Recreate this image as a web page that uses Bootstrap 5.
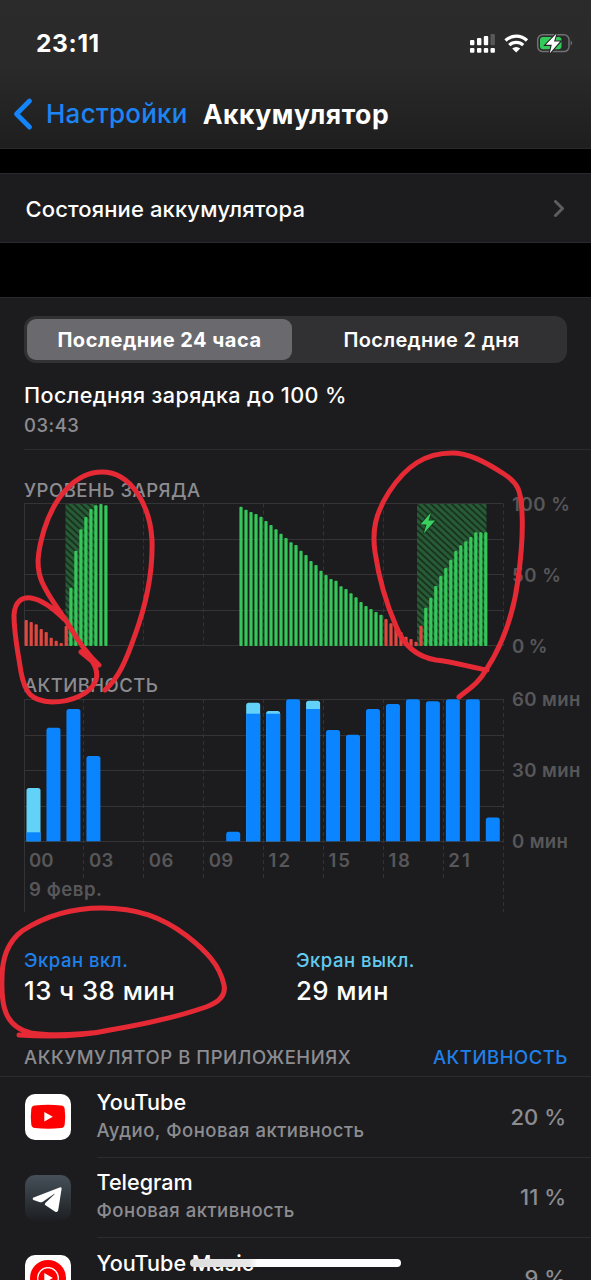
<!DOCTYPE html>
<html lang="ru" data-bs-theme="dark">
<head>
<meta charset="utf-8">
<meta name="viewport" content="width=device-width, initial-scale=1">
<title>Аккумулятор</title>
<link rel="stylesheet" href="https://cdn.jsdelivr.net/npm/bootstrap@5.3.0/dist/css/bootstrap.min.css">
<style>
body{background:#000;color:#fff;font-family:Inter,"Liberation Sans",sans-serif;width:591px;height:1280px;overflow:hidden;position:relative;line-height:1}
.top-area{height:149px;background:linear-gradient(#2b2b2b 0,#2a2a2a 45%,#1e1e1e 100%);border-bottom:1px solid #292929}
.status{height:86px;padding:0 18px 0 36px}
.clock{font-size:24.6px;font-weight:700;letter-spacing:.6px;padding-top:1px}
.titlebar{height:56px;padding-left:12px}
.back{color:#1c84f3;font-size:26px;font-weight:500;letter-spacing:.25px}
.page-title{font-size:26.6px;font-weight:700;margin-left:15px;letter-spacing:.5px}
.panel{background:#1c1c1e}
.health{margin-top:24px;height:70px;padding:2px 26px 0 25.500px;border-top:1px solid #29292b;border-bottom:1px solid #29292b;font-size:22px;font-weight:500;letter-spacing:.13px}
.usage{margin-top:54px;height:983px;border-top:1px solid #29292b}
.seg{margin:18px 24px 0;height:47px;border-radius:12px;background:#313134;padding:3px;font-size:20px;font-weight:600}
.seg div{border-radius:9px;padding-top:1px}
.seg .on{background:#69696e;flex:0 0 265px;font-weight:700;letter-spacing:.5px}
.seg .off{letter-spacing:.32px;padding-left:7px}
.last{height:87px;margin-left:24px;padding-top:20px;border-bottom:1px solid #2c2c2e}
.last-title{font-size:21.6px;line-height:24px;font-weight:500;letter-spacing:.38px;margin-bottom:7px}
.gray{color:#8c8c91}
.sub{font-size:18.5px;line-height:22px;font-weight:500;letter-spacing:.5px}
.cap{font-size:18.5px;line-height:24px;font-weight:500;padding-left:24px;letter-spacing:.53px}
.cap-level{padding-top:28px;margin-bottom:1px}
.cap-act{letter-spacing:.45px;margin-bottom:1px}
.chart{display:block;overflow:visible}
.chart text{fill:#57575a;font-size:18.6px;font-weight:600}
.stats{height:97px;padding:30px 0 0 24px}
.stats>div{width:272px}
.screen-on,.cap-link{color:#1f80ea}
.screen-off{color:#62cbef}
.stat-value{font-size:25.8px;line-height:30px;font-weight:500;margin-top:5px;letter-spacing:.45px}
.apps-head{height:61px;padding:29px 23px 0 0;border-bottom:1px solid #2c2c2e}
.app-row{height:80.5px;padding-left:25px}
.app-body{margin-left:25.500px;padding-right:25px;height:100%;border-bottom:1px solid #2c2c2e}
.app-text{padding-bottom:4px}
.app-name{font-size:21.6px;line-height:26px;font-weight:500;margin-bottom:4px}
.pct{font-size:22px;font-weight:500}
.marker{position:absolute;left:0;top:0;pointer-events:none}
.home-bar{position:absolute;left:190px;top:1259px;width:211px;height:8px;border-radius:4px;background:linear-gradient(90deg,#ddd,#e8e8e8 28%,#fff 32%)}
</style>
</head>
<body>
<header class="top-area">
  <div class="status d-flex align-items-center justify-content-between">
    <span class="clock">23:11</span>
    <svg width="104" height="24" viewBox="469 31 104 24">
      <g fill="#fff"><rect x="470" y="40" width="4.400" height="5.300" rx="1"/><rect x="477" y="38" width="4.400" height="7.300" rx="1"/><rect x="483.800" y="36" width="4.400" height="9.300" rx="1"/><rect x="490.500" y="34" width="4.400" height="11.300" rx="1" opacity=".22"/>
      <rect x="470" y="48" width="4.400" height="4.700" rx="1"/><rect x="477" y="48" width="4.400" height="4.700" rx="1"/><rect x="483.800" y="48" width="4.400" height="4.700" rx="1"/><rect x="490.500" y="48" width="4.400" height="4.700" rx="1"/></g>
      <g fill="none" stroke="#fff" stroke-width="3.200"><path d="M505.500 40.500a15.500 15.500 0 0 1 21.500 0"/><path d="M509.300 45.200a10 10 0 0 1 13.900 0"/></g>
      <path d="M512.200 48.500a6 6 0 0 1 8 0l-4 4z" fill="#fff"/>
      <rect x="537.700" y="34.700" width="31.300" height="16.900" rx="5" fill="none" stroke="#717174" stroke-width="1.500"/>
      <path d="M570.700 40.500q3 2.600 0 5.200z" fill="#717174"/>
      <rect x="540" y="37" width="21.500" height="12.300" rx="3" fill="#33cc5a"/>
      <path d="M556.500 33.500l-10.700 11.300h6l-2 8.500 10.200-11.800h-6z" fill="#fff" stroke="#242424" stroke-width="2.200" paint-order="stroke"/>
    </svg>
  </div>
  <nav class="titlebar d-flex align-items-center">
    <svg width="22" height="34" viewBox="0 0 22 34"><path d="M17.500 4L4.500 17l13 13" fill="none" stroke="#1484fa" stroke-width="4.800" stroke-linecap="round" stroke-linejoin="round"/></svg>
    <span class="back ms-2 ps-1">Настройки</span>
    <span class="page-title">Аккумулятор</span>
  </nav>
</header>

<section class="panel health d-flex align-items-center justify-content-between">
  <span>Состояние аккумулятора</span>
  <svg width="12" height="18" viewBox="0 0 12 18"><path d="M2.500 1.500l7 7-7 7" fill="none" stroke="#5d5d61" stroke-width="3" stroke-linecap="round" stroke-linejoin="round"/></svg>
</section>

<main class="panel usage">
  <div class="seg d-flex text-center">
    <div class="on d-flex align-items-center justify-content-center">Последние 24 часа</div>
    <div class="flex-fill d-flex align-items-center justify-content-center off">Последние 2 дня</div>
  </div>
  <div class="last">
    <div class="last-title">Последняя зарядка до 100 %</div>
    <div class="sub gray">03:43</div>
  </div>
  <h2 class="cap gray cap-level">УРОВЕНЬ ЗАРЯДА</h2>
  <svg class="chart" id="level" width="591" height="170" viewBox="0 503 591 170">
    <defs><pattern id="hatch" width="7" height="6.500" patternUnits="userSpaceOnUse"><rect width="7" height="6.500" fill="#275c36"/><path d="M-7-6.500l21 19.500M-7 0l14 13M0-6.500l14 13" stroke="#17301d" stroke-width="1.800"/></pattern></defs>
  </svg>
  <h2 class="cap gray cap-act">АКТИВНОСТЬ</h2>
  <svg class="chart" id="activity" width="591" height="221" viewBox="0 698 591 221"></svg>
  <div class="stats d-flex">
    <div><div class="sub screen-on">Экран вкл.</div><div class="stat-value">13 ч 38 мин</div></div>
    <div><div class="sub screen-off">Экран выкл.</div><div class="stat-value">29 мин</div></div>
  </div>
  <div class="apps-head d-flex justify-content-between">
    <span class="cap gray">АККУМУЛЯТОР В ПРИЛОЖЕНИЯХ</span>
    <span class="cap cap-link">АКТИВНОСТЬ</span>
  </div>
  <div class="app-row d-flex align-items-center">
    <svg width="46" height="46" viewBox="0 0 46 46"><rect width="46" height="46" rx="10" fill="#fff"/><path d="M10 11.500q13-1.300 26 0 3.300.4 3.700 3.500 1 8 0 15.500-.4 3.200-3.700 3.600-13 1.300-26 0-3.300-.4-3.700-3.600-1-7.500 0-15.500.4-3.100 3.700-3.500z" fill="#f00"/><path d="M19.300 18v9.500l8.500-4.700z" fill="#fff"/></svg>
    <div class="app-body flex-fill d-flex align-items-center justify-content-between"><div class="app-text"><div class="app-name">YouTube</div><div class="sub gray">Аудио, Фоновая активность</div></div><span class="pct gray">20 %</span></div>
  </div>
  <div class="app-row d-flex align-items-center">
    <svg width="46" height="46" viewBox="0 0 46 46"><defs><linearGradient id="tg" x2="0" y2="1"><stop stop-color="#465059"/><stop offset="1" stop-color="#1c1e21"/></linearGradient></defs><rect width="46" height="46" rx="10" fill="url(#tg)"/><path d="M8 22.800Q7 24 8.500 25l6.500 2.200q1.500.4 2.800-.5L29 19q1-.5.300.4l-9 8.500q-1.200 1.200.2 2.300l9.700 6.500q2.300 1.100 3-1.500l3.400-21.500q.2-2-2-1.300z" fill="#fff"/></svg>
    <div class="app-body flex-fill d-flex align-items-center justify-content-between"><div class="app-text"><div class="app-name">Telegram</div><div class="sub gray">Фоновая активность</div></div><span class="pct gray">11 %</span></div>
  </div>
  <div class="app-row d-flex align-items-center">
    <svg width="46" height="46" viewBox="0 0 46 46"><rect width="46" height="46" rx="10" fill="#fff"/><circle cx="23" cy="23" r="18" fill="#f00"/><circle cx="23" cy="23" r="10.300" fill="none" stroke="#fff" stroke-width="1.200"/><path d="M19.300 18v10l8.500-5z" fill="#fff"/></svg>
    <div class="app-body flex-fill d-flex align-items-center justify-content-between"><div class="app-text"><div class="app-name">YouTube Music</div><div class="sub">&nbsp;</div></div><span class="pct gray">9 %</span></div>
  </div>
</main>

<svg class="marker" width="591" height="1280" fill="none" stroke="#e52a36" stroke-width="5" stroke-linecap="round" stroke-linejoin="round">
  <path d="M105 690C118 679 126 661 135 635C147 602 153 573 152 540C150 505 131 472 102 472C75 472 54 498 44 530C37 554 36 567 42 582C50 600 60 610 70 627C78 641 88 655 99 665L81 652L92 661C96 667 98 673 96 680C91 694 71 702 52 702C31 701 25 693 21 672C17 647 14 633 14 615C15 601 22 597 31 598C43 600 53 608 64 619"/>
  <path d="M459 697C470 688 478 684 486 670C505 641 514 610 518 580C522 550 523 530 522 513C521 490 518 483 504 474C484 461 468 453 452 453C425 453 406 466 389 492C375 514 372 531 375 552C379 579 386 603 396 626C404 647 418 657 436 660C454 662 470 667 487 670"/>
  <path d="M19 1035C50 1037 83 1036 110 1030C145 1024 180 1016 206 1007C220 1002 226 995 224 985C220 965 205 950 187 936C162 917 137 908 102 908C71 908 45 916 22 931C9 941 2 955 2 978C1 1006 5 1027 31 1033C55 1037 75 1034 92 1033"/>
</svg>
<div class="home-bar"></div>

<script src="https://cdn.jsdelivr.net/npm/bootstrap@5.3.0/dist/js/bootstrap.bundle.min.js"></script>
<script>
const NS='http://www.w3.org/2000/svg';
function add(svg,tag,attrs,text){const e=document.createElementNS(NS,tag);for(const k in attrs)e.setAttribute(k,attrs[k]);if(text)e.textContent=text;svg.appendChild(e)}
const level=document.getElementById('level'),act=document.getElementById('activity');
function grid(svg,top,down,edge){
  for(let i=0;i<5;i++)add(svg,'path',{d:`M24 ${Math.floor(top)+.5+Math.round(i*35.5)}H503`,stroke:'#343436'});
  for(let i=0;i<9;i++){const end=(i===0||i===8)?edge:down;add(svg,'path',{d:`M${i===0?24.5:23.5+i*60} ${top}V${end}`,stroke:'#333336','stroke-dasharray':i?'4 3':'none'})}
}
grid(level,503.500,646,646);
grid(act,699,878,912);
// Charging periods
add(level,'rect',{x:65.500,y:504,width:31.500,height:142,fill:'url(#hatch)'});
add(level,'rect',{x:417,y:504,width:69.500,height:142,fill:'url(#hatch)'});
// Battery charge: [x centre of first bar, bar tops, colour]
const red='#e0473f',green='#35c759';
[[26.200,[620,622,624.300,629,632,637.700,640.700,643,626],red],
 [70.900,[587.700,550.700,529.300,517,509,505.300,504,505.300],green],
 [241,[506.700,509.700,512,514,516.700,521,525,529.300,533.700,538,542.300,545,550.700,555,561,565,570.700,575,579,580.700,586.300,589,593.300,597.300,602,606,609,612,614.700],green],
 [386,[619,623.300,628.300,632,636.700,639,641.700,625.700],red],
 [425.800,[607.700,597.700,586,576,568,559.700,551,545.300,541.300,537,532.300,532.300,532.300],green]
].forEach(([x,tops,fill])=>tops.forEach((y,i)=>add(level,'rect',{x:x+5*i-1.600,y,width:3.200,height:646-y,rx:1,fill})));
add(level,'path',{d:'M431 512.500l-10.500 12h6l-2.700 9 11.300-13h-6.600z',fill:'#3ad15f',stroke:'#183520','stroke-width':1.500,'paint-order':'stroke'});
[['100 %',510.500,58],['50 %',581.500,49],['0 %',652.500,35.500]].forEach(([t,y,w])=>add(level,'text',{x:512,y,textLength:w},t));
// Screen activity per hour: [hour, top, top of the screen-on part]
[[0,788,832.300],[1,727.700],[2,709],[3,756],[10,831.700],[11,702.700,713.700],[12,711,713.700],[13,699.300],[14,700.700,709],[15,730],[16,734.700],[17,709],[18,704],[19,699.300],[20,701.300],[21,699.300],[22,699.300],[23,817.500]]
.forEach(([h,t,b])=>{
  const x=26.500+h*19.970,p=y=>`M${x} 841.300V${y+2.500}q0-2.500 2.500-2.500h9q2.500 0 2.500 2.500V841.300z`;
  add(act,'path',{d:p(t),fill:b?'#62d2f8':'#0a84ff'});
  if(b)add(act,'rect',{x,y:b,width:14,height:841.300-b,fill:'#0a84ff'});
});
[['60 мин',706,68.500],['30 мин',777,68.500],['0 мин',848,56]].forEach(([t,y,w])=>add(act,'text',{x:512,y,textLength:w},t));
['00','03','06','09','12','15','18','21'].forEach((t,i)=>add(act,'text',{x:29+i*59.900,y:867,textLength:i>3?21.500:24.500},t));
add(act,'text',{x:29,y:896,textLength:73},'9 февр.');
</script>
</body>
</html>
